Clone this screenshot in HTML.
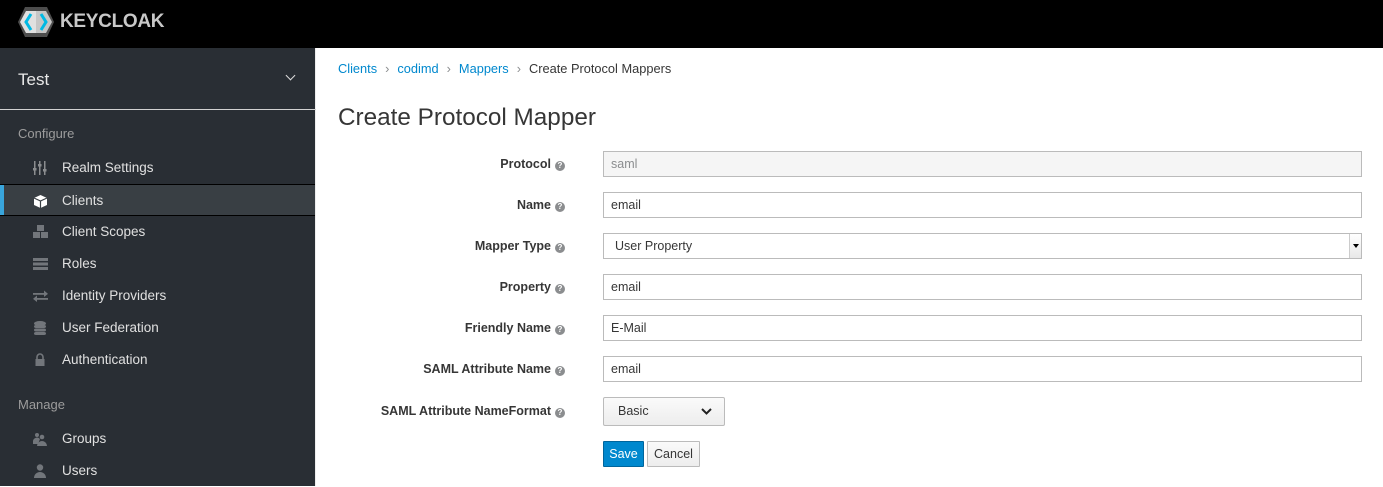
<!DOCTYPE html>
<html><head><style>
*{box-sizing:border-box;margin:0;padding:0}
body{width:1383px;height:486px;overflow:hidden;font-family:"Liberation Sans",sans-serif;font-size:12px;color:#363636;background:#fff;position:relative}
.top{position:absolute;left:0;top:0;width:1383px;height:48px;background:#000}
.logo{position:absolute;left:18px;top:8px;height:28px;display:flex;align-items:center}
.logo span{color:#c8c8c8;font-weight:bold;font-size:19px;letter-spacing:-0.3px;margin-left:-4px}
.side{position:absolute;left:0;top:48px;width:316px;height:438px;background:#292e34;border-right:1px solid #ededed}
.realm{position:absolute;left:0;top:0;width:316px;height:62px;border-bottom:1px solid #d1d1d1;color:#e8e8e8;font-size:17px;padding:22px 18px}
.realm .car{position:absolute;right:22px;top:24px;width:7px;height:7px;border-right:1.5px solid #ddd;border-bottom:1.5px solid #ddd;transform:rotate(45deg)}
.sec{position:absolute;left:18px;color:#9c9c9c;font-size:13px}
.item{position:absolute;left:0;width:315px;height:32px;color:#e0e0e0;font-size:13.5px;padding-left:62px;line-height:32px}
.item.act{background:#393f44;border-top:1px solid #000;border-bottom:1px solid #000}
.item.act:before{content:"";position:absolute;left:0;top:0;width:4px;height:100%;background:#39a5dc}
.ic{position:absolute;left:33px;top:9px;width:15px;height:14px}
.bc{position:absolute;left:338px;top:61px;font-size:12.8px}
.bc a{color:#0088ce}
.bc .s{color:#8b8d8f;margin:0 8px}
h1{position:absolute;left:338px;top:104px;font-weight:normal;font-size:24.3px;color:#363636}
.lab{position:absolute;right:818px;font-weight:bold;font-size:12.5px;color:#363636;height:26px;line-height:26px}
.q{display:inline-block;width:10px;height:10px;border-radius:50%;background:#8b8d8f;color:#fff;font-size:8px;line-height:10px;text-align:center;margin-left:4px;vertical-align:0px}
.in{position:absolute;left:603px;width:759px;height:26px;border:1px solid #bbb;padding:0 7px;line-height:24px;font-size:12.5px;color:#363636;background:#fff}
.in.dis{background:#f5f5f5;color:#8b8d8f}
.sel .arr{position:absolute;right:0;top:0;width:12px;height:24px;background:linear-gradient(#fff,#e8e8e8);border-left:1px solid #ccc}
.sel .arr:after{content:"";position:absolute;left:3px;top:10px;border-left:3px solid transparent;border-right:3px solid transparent;border-top:4px solid #000}
.btn{position:absolute;height:26px;border:1px solid #bbb;border-radius:1px;font-size:12.5px;line-height:24px;text-align:center}
</style></head><body>
<div class="top"><div class="logo">
<svg width="46" height="30" viewBox="0 0 46 30"><polygon points="7,0 29,0 36,15 29,30 7,30 0,15" fill="#4d4d4d"/><polygon points="8,4 18,4 18,26 8,26 2,15" fill="#e0e0e0"/><polygon points="18,4 28,4 34,15 28,26 18,26" fill="#c6c6c6"/><polyline points="13,7 8,15 13,23" fill="none" stroke="#00b9e4" stroke-width="3"/><polyline points="23,7 28,15 23,23" fill="none" stroke="#00b9e4" stroke-width="3"/></svg>
<span>KEYCLOAK</span></div></div>
<div class="side">
<div class="realm">Test<div class="car"></div></div>
<div class="sec" style="top:78px">Configure</div>
<div class="item" style="top:104px"><svg class="ic" viewBox="0 0 15 14"><g fill="#8b8d8f"><rect x="1" y="0" width="1.5" height="14"/><rect x="6" y="0" width="1.5" height="14"/><rect x="11" y="0" width="1.5" height="14"/><rect x="0" y="7" width="3.5" height="2.5"/><rect x="5" y="3" width="3.5" height="2.5"/><rect x="10" y="8" width="3.5" height="2.5"/></g></svg>Realm Settings</div>
<div class="item act" style="top:136px"><svg class="ic" viewBox="0 0 15 14"><polygon points="7.5,1 14,4 14,11 7.5,14 1,11 1,4" fill="#fff"/><polyline points="1,4 7.5,7 14,4" fill="none" stroke="#393f44" stroke-width="1.2"/><line x1="7.5" y1="7" x2="7.5" y2="14" stroke="#393f44" stroke-width="1.2"/></svg>Clients</div>
<div class="item" style="top:168px"><svg class="ic" viewBox="0 0 15 14"><g fill="#72767b"><rect x="4" y="0" width="7" height="6"/><rect x="0" y="7" width="7" height="6"/><rect x="8" y="7" width="7" height="6"/></g></svg>Client Scopes</div>
<div class="item" style="top:200px"><svg class="ic" viewBox="0 0 15 14"><g fill="#72767b"><rect x="0" y="1" width="15" height="3"/><rect x="0" y="5.5" width="15" height="3"/><rect x="0" y="10" width="15" height="3"/></g></svg>Roles</div>
<div class="item" style="top:232px"><svg class="ic" viewBox="0 0 15 14"><g fill="#72767b"><rect x="0" y="4" width="12" height="1.8"/><polygon points="11,1.5 15,4.9 11,8"/><rect x="3" y="9" width="12" height="1.8"/><polygon points="4,6.5 0,9.9 4,13"/></g></svg>Identity Providers</div>
<div class="item" style="top:264px"><svg class="ic" viewBox="0 0 15 14"><g fill="#72767b"><ellipse cx="7" cy="2.5" rx="6" ry="2.5"/><rect x="1" y="4" width="12" height="3" rx="2"/><rect x="1" y="7.5" width="12" height="3" rx="2"/><rect x="1" y="11" width="12" height="3" rx="2"/></g></svg>User Federation</div>
<div class="item" style="top:296px"><svg class="ic" viewBox="0 0 15 14"><g fill="#72767b"><path d="M4,6 V4 a3,3 0 0 1 6,0 V6" fill="none" stroke="#72767b" stroke-width="1.6"/><rect x="2.5" y="6" width="9" height="7"/></g></svg>Authentication</div>
<div class="sec" style="top:349px">Manage</div>
<div class="item" style="top:375px"><svg class="ic" viewBox="0 0 15 14"><g fill="#72767b"><circle cx="4" cy="3" r="2"/><circle cx="9" cy="5" r="2.3"/><path d="M0,10 a4,4 0 0 1 7,-3 L5,12 H0Z"/><path d="M4,14 a5,5 0 0 1 10,0Z"/></g></svg>Groups</div>
<div class="item" style="top:407px"><svg class="ic" viewBox="0 0 15 14"><g fill="#72767b"><circle cx="7" cy="3.5" r="3.2"/><path d="M1,14 a6,6 0 0 1 12,0Z"/></g></svg>Users</div>
</div>
<div class="bc"><a>Clients</a><span class="s">›</span><a>codimd</a><span class="s">›</span><a>Mappers</a><span class="s">›</span>Create Protocol Mappers</div>
<h1>Create Protocol Mapper</h1>
<div class="lab" style="top:151px">Protocol<span class="q">?</span></div><div class="in dis" style="top:151px">saml</div>
<div class="lab" style="top:192px">Name<span class="q">?</span></div><div class="in" style="top:192px">email</div>
<div class="lab" style="top:233px">Mapper Type<span class="q">?</span></div><div class="in sel" style="top:233px;padding-left:11px">User Property<div class="arr"></div></div>
<div class="lab" style="top:274px">Property<span class="q">?</span></div><div class="in" style="top:274px">email</div>
<div class="lab" style="top:315px">Friendly Name<span class="q">?</span></div><div class="in" style="top:315px">E-Mail</div>
<div class="lab" style="top:356px">SAML Attribute Name<span class="q">?</span></div><div class="in" style="top:356px">email</div>
<div class="lab" style="top:398px">SAML Attribute NameFormat<span class="q">?</span></div>
<div class="btn" style="left:603px;top:397px;width:122px;height:29px;line-height:27px;background:linear-gradient(#fafafa,#ededed);text-align:left;padding-left:14px;border-radius:2px">Basic<svg style="position:absolute;right:12px;top:10px" width="11" height="7" viewBox="0 0 11 7"><polyline points="1,1 5.5,5.5 10,1" fill="none" stroke="#222" stroke-width="2"/></svg></div>
<div class="btn" style="left:603px;top:441px;width:41px;background:#0088ce;border-color:#00659c;color:#fff">Save</div>
<div class="btn" style="left:647px;top:441px;width:53px;background:linear-gradient(#fafafa,#ededed)">Cancel</div>
</body></html>
